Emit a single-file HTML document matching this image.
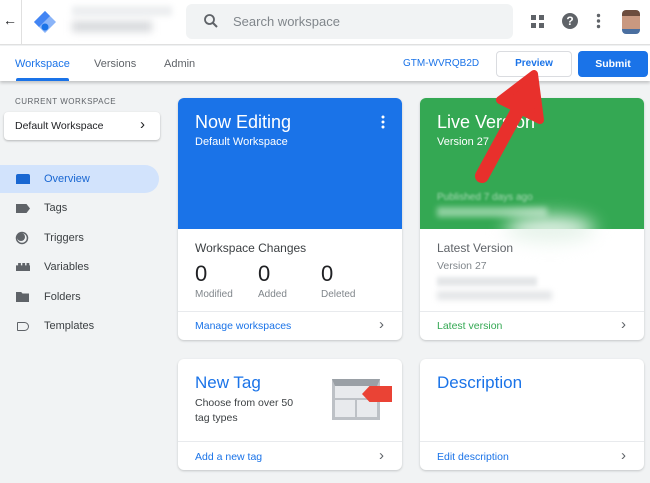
<!DOCTYPE html>
<html><head><style>
*{margin:0;padding:0;box-sizing:border-box}
body{width:650px;height:483px;overflow:hidden;background:#f1f3f4;font-family:"Liberation Sans",sans-serif;position:relative;color:#202124}
.a{position:absolute}
.card{position:absolute;background:#fff;border-radius:6px;box-shadow:0 1px 2px rgba(60,64,67,.25);overflow:hidden}
.nav{position:absolute;left:44px;font-size:11px;color:#3c4043}
.ic{position:absolute;left:16px;background:#5f6368}
.link{position:absolute;font-size:10.5px;color:#1a73e8}
.chev{position:absolute;font-size:15px;color:#5f6368}
</style></head><body>
<div class="a" style="left:0;top:0;width:650px;height:45px;background:#fff;border-bottom:1px solid #e0e0e0"></div>
<div class="a" style="left:3px;top:12px;font-size:14px;color:#202124">←</div>
<div class="a" style="left:21px;top:0;width:1px;height:45px;background:#e0e0e0"></div>
<svg class="a" style="left:33px;top:10px" width="24" height="24" viewBox="0 0 24 24"><path d="M12 1 L23 12 L12 23 L1 12Z" fill="#8ab4f8"/><path d="M12 1 L17 6 L6 17 L1 12Z" fill="#4285f4"/><circle cx="12" cy="17" r="3.5" fill="#1a73e8"/></svg>
<div class="a" style="left:72px;top:6px;width:100px;height:10px;background:#eceef0;filter:blur(3px)"></div>
<div class="a" style="left:72px;top:21px;width:80px;height:11px;background:#d8dadd;filter:blur(4px)"></div>
<div class="a" style="left:186px;top:4px;width:327px;height:35px;background:#f1f3f4;border-radius:6px"></div>
<svg class="a" style="left:203px;top:13px" width="16" height="16" viewBox="0 0 16 16"><circle cx="6.5" cy="6.5" r="4.5" stroke="#5f6368" stroke-width="1.8" fill="none"/><path d="M10 10 L14 14" stroke="#5f6368" stroke-width="2"/></svg>
<div class="a" style="left:233px;top:14px;font-size:13px;color:#80868b">Search workspace</div>
<svg class="a" style="left:531px;top:15px" width="13" height="13"><rect x="0" y="0" width="5" height="5" fill="#5f6368"/><rect x="8" y="0" width="5" height="5" fill="#5f6368"/><rect x="0" y="8" width="5" height="5" fill="#5f6368"/><rect x="8" y="8" width="5" height="5" fill="#5f6368"/></svg>
<div class="a" style="left:562px;top:13px;width:16px;height:16px;border-radius:50%;background:#5f6368;color:#fff;font-size:12px;font-weight:bold;text-align:center;line-height:16px">?</div>
<svg class="a" style="left:596px;top:13px" width="5" height="16"><circle cx="2.5" cy="2.5" r="1.7" fill="#5f6368"/><circle cx="2.5" cy="8" r="1.7" fill="#5f6368"/><circle cx="2.5" cy="13.5" r="1.7" fill="#5f6368"/></svg>
<div class="a" style="left:622px;top:10px;width:18px;height:24px;border-radius:4px;background:linear-gradient(#6d4c3d 0 25%,#c99880 25% 80%,#4a6fa0 80%)"></div>
<div class="a" style="left:0;top:46px;width:650px;height:35px;background:#fff;box-shadow:0 2px 3px rgba(0,0,0,.2)"></div>
<div class="a" style="left:15px;top:58px;font-size:11px;color:#1a73e8">Workspace</div>
<div class="a" style="left:16px;top:78px;width:53px;height:3px;background:#1a73e8;border-radius:2px 2px 0 0"></div>
<div class="a" style="left:94px;top:58px;font-size:11px;color:#5f6368">Versions</div>
<div class="a" style="left:164px;top:58px;font-size:11px;color:#5f6368">Admin</div>
<div class="a" style="left:403px;top:58px;font-size:10px;color:#1a73e8">GTM-WVRQB2D</div>
<div class="a" style="left:496px;top:51px;width:76px;height:26px;border:1px solid #dadce0;border-radius:4px;font-size:10px;color:#1a73e8;font-weight:bold;text-align:center;line-height:24px">Preview</div>
<div class="a" style="left:578px;top:51px;width:70px;height:26px;background:#1a73e8;border-radius:4px;font-size:10.5px;color:#fff;font-weight:bold;text-align:center;line-height:26px">Submit</div>
<div class="a" style="left:15px;top:97px;font-size:8px;letter-spacing:.5px;color:#5f6368">CURRENT WORKSPACE</div>
<div class="a" style="left:4px;top:112px;width:156px;height:28px;background:#fff;border-radius:4px;box-shadow:0 1px 2px rgba(0,0,0,.25)"></div>
<div class="a" style="left:15px;top:120px;font-size:10.5px;color:#202124">Default Workspace</div>
<div class="a" style="left:140px;top:116px;font-size:15px;color:#202124">›</div>
<div class="a" style="left:0;top:165px;width:159px;height:28px;background:#d2e3fc;border-radius:0 14px 14px 0"></div>
<div class="ic" style="top:174px;width:14px;height:10px;background:#1967d2;border-radius:2px 2px 0 0"></div>
<div class="nav" style="top:173px;color:#1967d2">Overview</div>
<div class="ic" style="top:204px;width:14px;height:9px;clip-path:polygon(0 0,75% 0,100% 50%,75% 100%,0 100%)"></div>
<div class="nav" style="top:202px">Tags</div>
<svg class="a" style="left:15px;top:231px" width="14" height="14"><circle cx="7" cy="7" r="5.5" stroke="#5f6368" stroke-width="1.5" fill="none"/><circle cx="6" cy="6" r="4" fill="#5f6368"/></svg>
<div class="nav" style="top:232px">Triggers</div>
<div class="ic" style="top:263px;width:14px;height:8px;clip-path:polygon(0 30%,15% 30%,15% 0,35% 0,35% 30%,45% 30%,45% 0,65% 0,65% 30%,75% 30%,75% 0,95% 0,95% 30%,100% 30%,100% 100%,0 100%)"></div>
<div class="nav" style="top:261px">Variables</div>
<div class="ic" style="top:292px;width:13px;height:10px;clip-path:polygon(0 0,40% 0,50% 15%,100% 15%,100% 100%,0 100%)"></div>
<div class="nav" style="top:291px">Folders</div>
<div class="a" style="left:17px;top:322px;width:12px;height:9px;border:1.5px solid #5f6368;border-radius:1px 5px 5px 1px"></div>
<div class="nav" style="top:320px">Templates</div>
<div class="card" style="left:178px;top:98px;width:224px;height:242px">
  <div class="a" style="left:0;top:0;width:224px;height:131px;background:#1a73e8"></div>
  <div class="a" style="left:17px;top:14px;font-size:18px;color:#fff">Now Editing</div>
  <div class="a" style="left:17px;top:38px;font-size:11px;color:#fff">Default Workspace</div>
  <svg class="a" style="left:203px;top:17px" width="4" height="14"><circle cx="2" cy="2" r="1.5" fill="#fff"/><circle cx="2" cy="7" r="1.5" fill="#fff"/><circle cx="2" cy="12" r="1.5" fill="#fff"/></svg>
  <div class="a" style="left:17px;top:143px;font-size:12px;color:#3c4043">Workspace Changes</div>
  <div class="a" style="left:17px;top:163px;font-size:22px;color:#202124">0</div>
  <div class="a" style="left:80px;top:163px;font-size:22px;color:#202124">0</div>
  <div class="a" style="left:143px;top:163px;font-size:22px;color:#202124">0</div>
  <div class="a" style="left:17px;top:191px;font-size:10px;color:#80868b">Modified</div>
  <div class="a" style="left:80px;top:191px;font-size:10px;color:#80868b">Added</div>
  <div class="a" style="left:143px;top:191px;font-size:10px;color:#80868b">Deleted</div>
  <div class="a" style="left:0;top:213px;width:224px;height:1px;background:#e8eaed"></div>
  <div class="link" style="left:17px;top:222px">Manage workspaces</div>
  <div class="chev" style="left:201px;top:218px">›</div>
</div>
<div class="card" style="left:420px;top:98px;width:224px;height:242px">
  <div class="a" style="left:0;top:0;width:224px;height:131px;background:#34a853"></div>
  <div class="a" style="left:17px;top:14px;font-size:18px;color:#fff">Live Version</div>
  <div class="a" style="left:17px;top:38px;font-size:11px;color:#fff">Version 27</div>
  <div class="a" style="left:17px;top:94px;font-size:10px;color:#a8dab5;filter:blur(1px)">Published 7 days ago</div>
  <div class="a" style="left:17px;top:109px;width:110px;height:10px;background:#8fd0a0;filter:blur(3px)"></div>
  <div class="a" style="left:85px;top:118px;width:90px;height:26px;background:#e6f3ea;filter:blur(9px);border-radius:50%"></div>
  <div class="a" style="left:17px;top:143px;font-size:12px;color:#5f6368">Latest Version</div>
  <div class="a" style="left:17px;top:162px;font-size:10.5px;color:#80868b">Version 27</div>
  <div class="a" style="left:17px;top:179px;width:100px;height:9px;background:#e4e6e8;filter:blur(2px)"></div>
  <div class="a" style="left:17px;top:193px;width:115px;height:9px;background:#e4e6e8;filter:blur(3px)"></div>
  <div class="a" style="left:0;top:213px;width:224px;height:1px;background:#e8eaed"></div>
  <div class="link" style="left:17px;top:222px;color:#34a853">Latest version</div>
  <div class="chev" style="left:201px;top:218px">›</div>
</div>
<div class="card" style="left:178px;top:359px;width:224px;height:111px">
  <div class="a" style="left:17px;top:14px;font-size:17px;color:#1a73e8">New Tag</div>
  <div class="a" style="left:17px;top:37px;font-size:10.5px;color:#3c4043;line-height:15px">Choose from over 50<br>tag types</div>
  <div class="a" style="left:154px;top:20px;width:48px;height:41px;background:#e8eaed;border:3px solid #bdc1c6;border-top:7px solid #9aa0a6"></div>
  <div class="a" style="left:157px;top:39px;width:42px;height:2px;background:#bdc1c6"></div>
  <div class="a" style="left:177px;top:41px;width:2px;height:17px;background:#bdc1c6"></div>
  <div class="a" style="left:184px;top:27px;width:30px;height:16px;background:#ea4335;clip-path:polygon(25% 0,100% 0,100% 100%,25% 100%,0 50%)"></div>
  <div class="a" style="left:0;top:82px;width:224px;height:1px;background:#e8eaed"></div>
  <div class="link" style="left:17px;top:92px">Add a new tag</div>
  <div class="chev" style="left:201px;top:88px">›</div>
</div>
<div class="card" style="left:420px;top:359px;width:224px;height:111px">
  <div class="a" style="left:17px;top:14px;font-size:17px;color:#1a73e8">Description</div>
  <div class="a" style="left:0;top:82px;width:224px;height:1px;background:#e8eaed"></div>
  <div class="link" style="left:17px;top:92px">Edit description</div>
  <div class="chev" style="left:201px;top:88px">›</div>
</div>
<svg class="a" style="left:460px;top:68px" width="100" height="120"><path d="M22 108 L58 42" stroke="#e8302c" stroke-width="14" stroke-linecap="round"/><path d="M74 6 L80 52 L40 32Z" fill="#e8302c" stroke="#e8302c" stroke-width="8" stroke-linejoin="round"/></svg>
</body></html>
